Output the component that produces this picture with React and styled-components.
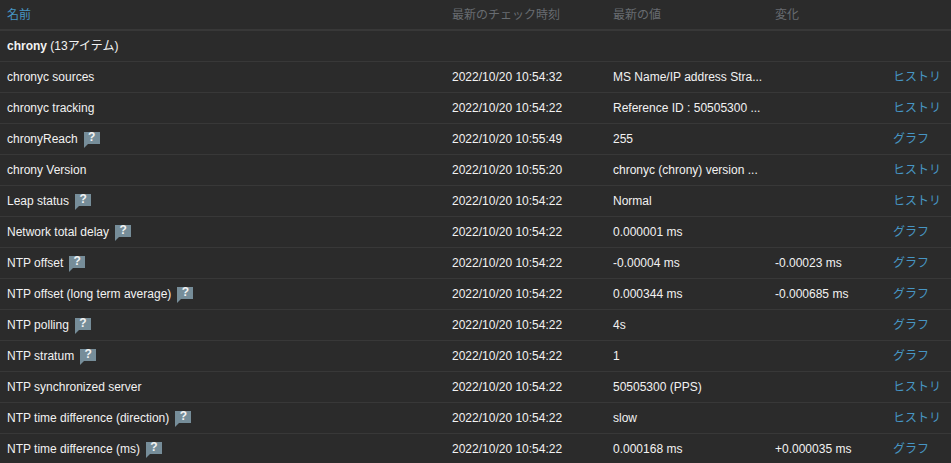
import React from "react";
import styled, { createGlobalStyle } from "styled-components";

const GlobalStyle = createGlobalStyle`
  html, body {
    margin: 0;
    padding: 0;
    background-color: #2b2b2b;
  }
  body {
    width: 951px;
    height: 463px;
    overflow: hidden;
    font-family: "Liberation Sans", "Noto Sans CJK JP", sans-serif;
    font-size: 12px;
    color: #f2f2f2;
  }
`;

const Table = styled.table`
  width: 951px;
  table-layout: fixed;
  border-collapse: collapse;
  line-height: 14px;
`;

const HeadCell = styled.th`
  height: 30px;
  padding: 0 6px 0 ${(p) => (p.$active ? 7 : 6)}px;
  box-sizing: border-box;
  border-bottom: 2px solid #383838;
  text-align: left;
  font-weight: normal;
  vertical-align: middle;
  color: ${(p) => (p.$active ? "#4796c4" : "#686c71")};
`;

const Row = styled.tr`
  height: 31px;
  border-bottom: 1px solid #383838;
`;

const Cell = styled.td`
  padding: 0 6px;
  box-sizing: border-box;
  vertical-align: middle;
  white-space: nowrap;
  overflow: hidden;
`;

const NameCell = styled(Cell)`
  padding-left: 7px;
`;

const GroupName = styled.b`
  font-weight: bold;
`;

const ItemLink = styled.a`
  color: #4796c4;
`;

const Hint = styled.span`
  display: inline-block;
  position: relative;
  width: 16px;
  height: 12px;
  margin: -4px 0 0 6px;
  vertical-align: 2px;
  background-color: #768d99;
  color: #f2f2f2;
  font-size: 12px;
  font-weight: bold;
  line-height: 10px;
  text-align: center;

  &::after {
    content: "";
    position: absolute;
    left: 0;
    top: 12px;
    border-top: 4px solid #768d99;
    border-right: 4px solid transparent;
  }
`;

const items = [
  ["chronyc sources", false, "2022/10/20 10:54:32", "MS Name/IP address Stra...", "", "ヒストリ"],
  ["chronyc tracking", false, "2022/10/20 10:54:22", "Reference ID : 50505300 ...", "", "ヒストリ"],
  ["chronyReach", true, "2022/10/20 10:55:49", "255", "", "グラフ"],
  ["chrony Version", false, "2022/10/20 10:55:20", "chronyc (chrony) version ...", "", "ヒストリ"],
  ["Leap status", true, "2022/10/20 10:54:22", "Normal", "", "ヒストリ"],
  ["Network total delay", true, "2022/10/20 10:54:22", "0.000001 ms", "", "グラフ"],
  ["NTP offset", true, "2022/10/20 10:54:22", "-0.00004 ms", "-0.00023 ms", "グラフ"],
  ["NTP offset (long term average)", true, "2022/10/20 10:54:22", "0.000344 ms", "-0.000685 ms", "グラフ"],
  ["NTP polling", true, "2022/10/20 10:54:22", "4s", "", "グラフ"],
  ["NTP stratum", true, "2022/10/20 10:54:22", "1", "", "グラフ"],
  ["NTP synchronized server", false, "2022/10/20 10:54:22", "50505300 (PPS)", "", "ヒストリ"],
  ["NTP time difference (direction)", true, "2022/10/20 10:54:22", "slow", "", "ヒストリ"],
  ["NTP time difference (ms)", true, "2022/10/20 10:54:22", "0.000168 ms", "+0.000035 ms", "グラフ"],
];

export default function App() {
  return (
    <>
      <GlobalStyle />
      <Table>
        <colgroup>
          <col style={{ width: 446 }} />
          <col style={{ width: 161 }} />
          <col style={{ width: 162 }} />
          <col style={{ width: 118 }} />
          <col style={{ width: 64 }} />
        </colgroup>
        <thead>
          <tr>
            <HeadCell $active>名前</HeadCell>
            <HeadCell>最新のチェック時刻</HeadCell>
            <HeadCell>最新の値</HeadCell>
            <HeadCell>変化</HeadCell>
            <HeadCell />
          </tr>
        </thead>
        <tbody>
          <Row>
            <NameCell colSpan={5}>
              <GroupName>chrony</GroupName> (13アイテム)
            </NameCell>
          </Row>
          {items.map(([name, hint, time, value, change, link]) => (
            <Row key={name}>
              <NameCell>
                {name}
                {hint && <Hint>?</Hint>}
              </NameCell>
              <Cell>{time}</Cell>
              <Cell>{value}</Cell>
              <Cell>{change}</Cell>
              <Cell>
                <ItemLink>{link}</ItemLink>
              </Cell>
            </Row>
          ))}
        </tbody>
      </Table>
    </>
  );
}
